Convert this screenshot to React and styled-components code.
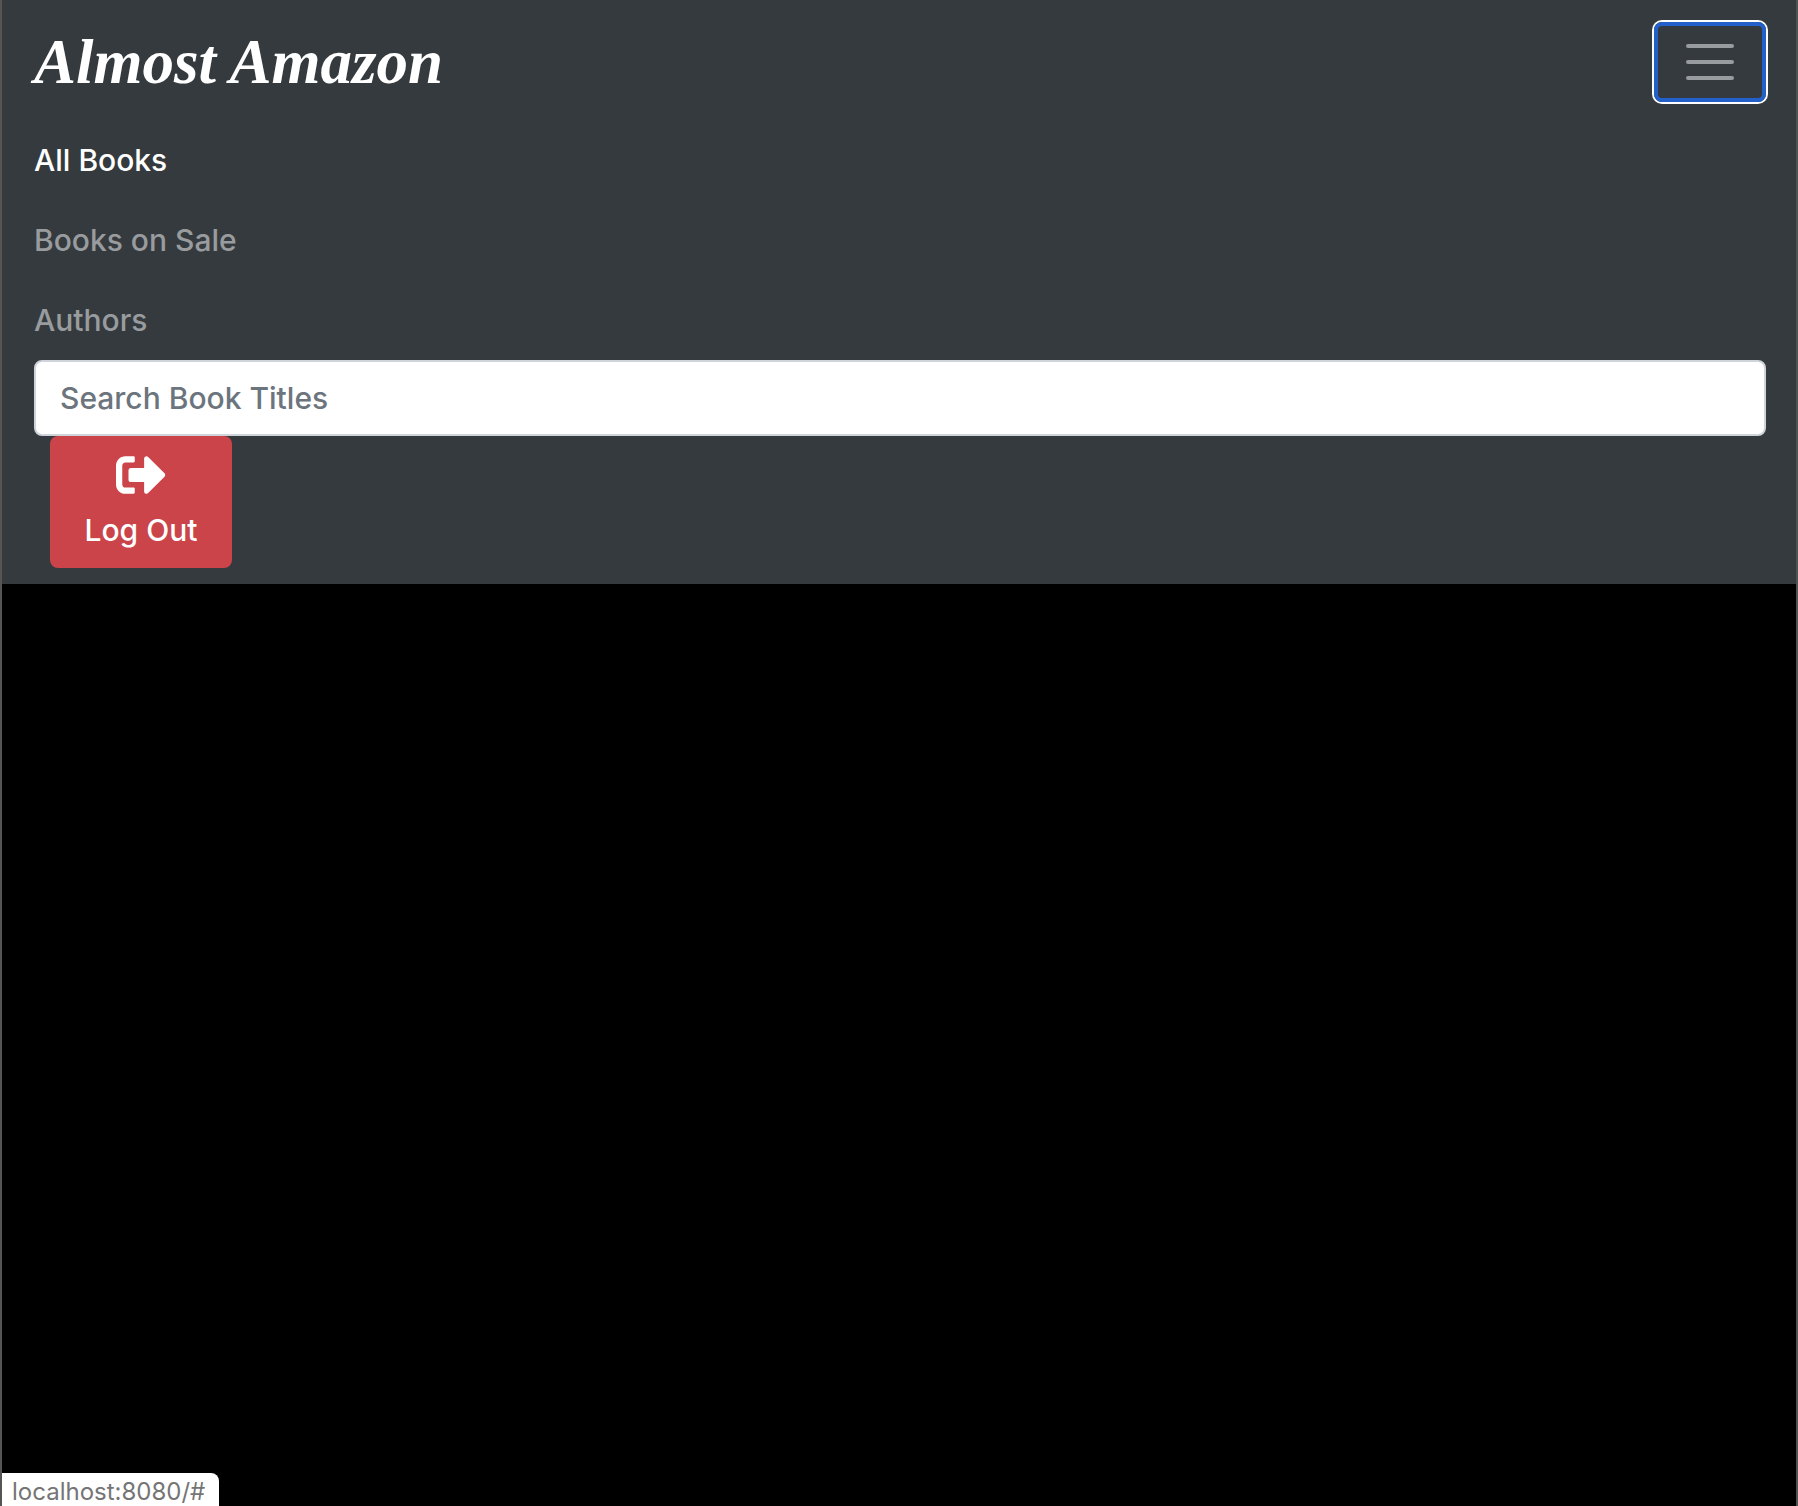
import React, { useState } from "react";
import styled, { createGlobalStyle } from "styled-components";
import { FaSignOutAlt } from "react-icons/fa";

const GlobalStyle = createGlobalStyle`
  *, *::before, *::after { box-sizing: border-box; }
  body {
    margin: 0;
    background: #000;
    color: #fff;
    font-family: Inter, Roboto, "Liberation Sans", sans-serif;
    font-size: 30px;
    font-weight: 500;
    line-height: 48px;
  }
`;

const Page = styled.div`
  min-height: 100vh;
  border-left: 2px solid #555;
  border-right: 2px solid #505354;
`;

const Navbar = styled.nav`
  display: flex;
  flex-wrap: wrap;
  align-items: center;
  justify-content: space-between;
  padding: 16px 30px 16px 32px;
  background: #353a3e;
`;

const Brand = styled.a`
  padding: 6px 0;
  color: #fff;
  font-family: "Apple Chancery", "Liberation Serif", serif;
  font-size: 63px;
  font-style: italic;
  font-weight: 700;
  line-height: 80px;
  text-decoration: none;
  white-space: nowrap;
`;

const Toggler = styled.button`
  display: flex;
  align-items: center;
  justify-content: center;
  width: 112px;
  height: 80px;
  padding: 0;
  border: 4px solid #2360c9;
  border-radius: 8px;
  background: transparent;
  box-shadow: 0 0 0 2px #fff;
  outline: none;
  cursor: pointer;
`;

const Collapse = styled.div`
  display: ${(p) => (p.$open ? "block" : "none")};
  flex-basis: 100%;
  padding-top: 12px;
`;

const NavList = styled.ul`
  margin: 0;
  padding: 0;
  list-style: none;
`;

const NavLink = styled.a`
  display: block;
  padding: 16px 0;
  color: ${(p) => (p.$active ? "#fff" : "#999c9e")};
  text-decoration: none;
`;

const SearchInput = styled.input`
  display: block;
  width: 100%;
  height: 76px;
  padding: 12px 24px;
  border: 2px solid #ced4da;
  border-radius: 8px;
  background: #fff;
  color: #495057;
  font: inherit;
  &::placeholder { color: #6c757d; opacity: 1; }
`;

const LogoutButton = styled.button`
  display: flex;
  flex-direction: column;
  align-items: center;
  gap: 6px;
  min-width: 182px;
  margin-left: 16px;
  padding: 14px 24px;
  border: 0;
  border-radius: 8px;
  background: #cb444a;
  color: #fff;
  font: inherit;
  cursor: pointer;
  svg { height: 50px; width: 50px; }
`;

const StatusBubble = styled.div`
  position: fixed;
  left: 2px;
  bottom: 0;
  padding: 4px 14px 0 10px;
  border-radius: 0 8px 0 0;
  background: #fff;
  color: #757575;
  font-size: 24px;
  font-weight: 400;
  line-height: 29px;
`;

const links = ["All Books", "Books on Sale", "Authors"];

export default function App() {
  const [open, setOpen] = useState(true);
  const [active, setActive] = useState(links[0]);
  return (
    <Page>
      <GlobalStyle />
      <Navbar>
        <Brand href="#">Almost Amazon</Brand>
        <Toggler
          type="button"
          aria-label="Toggle navigation"
          aria-expanded={open}
          onClick={() => setOpen(!open)}
        >
          <svg width="60" height="60" viewBox="0 0 30 30" fill="none" aria-hidden="true">
            <path d="M4 7h22M4 15h22M4 23h22" stroke="#999c9e" strokeWidth="2" strokeLinecap="round" />
          </svg>
        </Toggler>
        <Collapse $open={open}>
          <NavList>
            {links.map((label) => (
              <li key={label}>
                <NavLink href="#" $active={label === active} onClick={() => setActive(label)}>
                  {label}
                </NavLink>
              </li>
            ))}
          </NavList>
          <SearchInput type="text" aria-label="Search Book Titles" placeholder="Search Book Titles" />
          <LogoutButton type="button">
            <FaSignOutAlt aria-hidden="true" />
            Log Out
          </LogoutButton>
        </Collapse>
      </Navbar>
      <StatusBubble>localhost:8080/#</StatusBubble>
    </Page>
  );
}
